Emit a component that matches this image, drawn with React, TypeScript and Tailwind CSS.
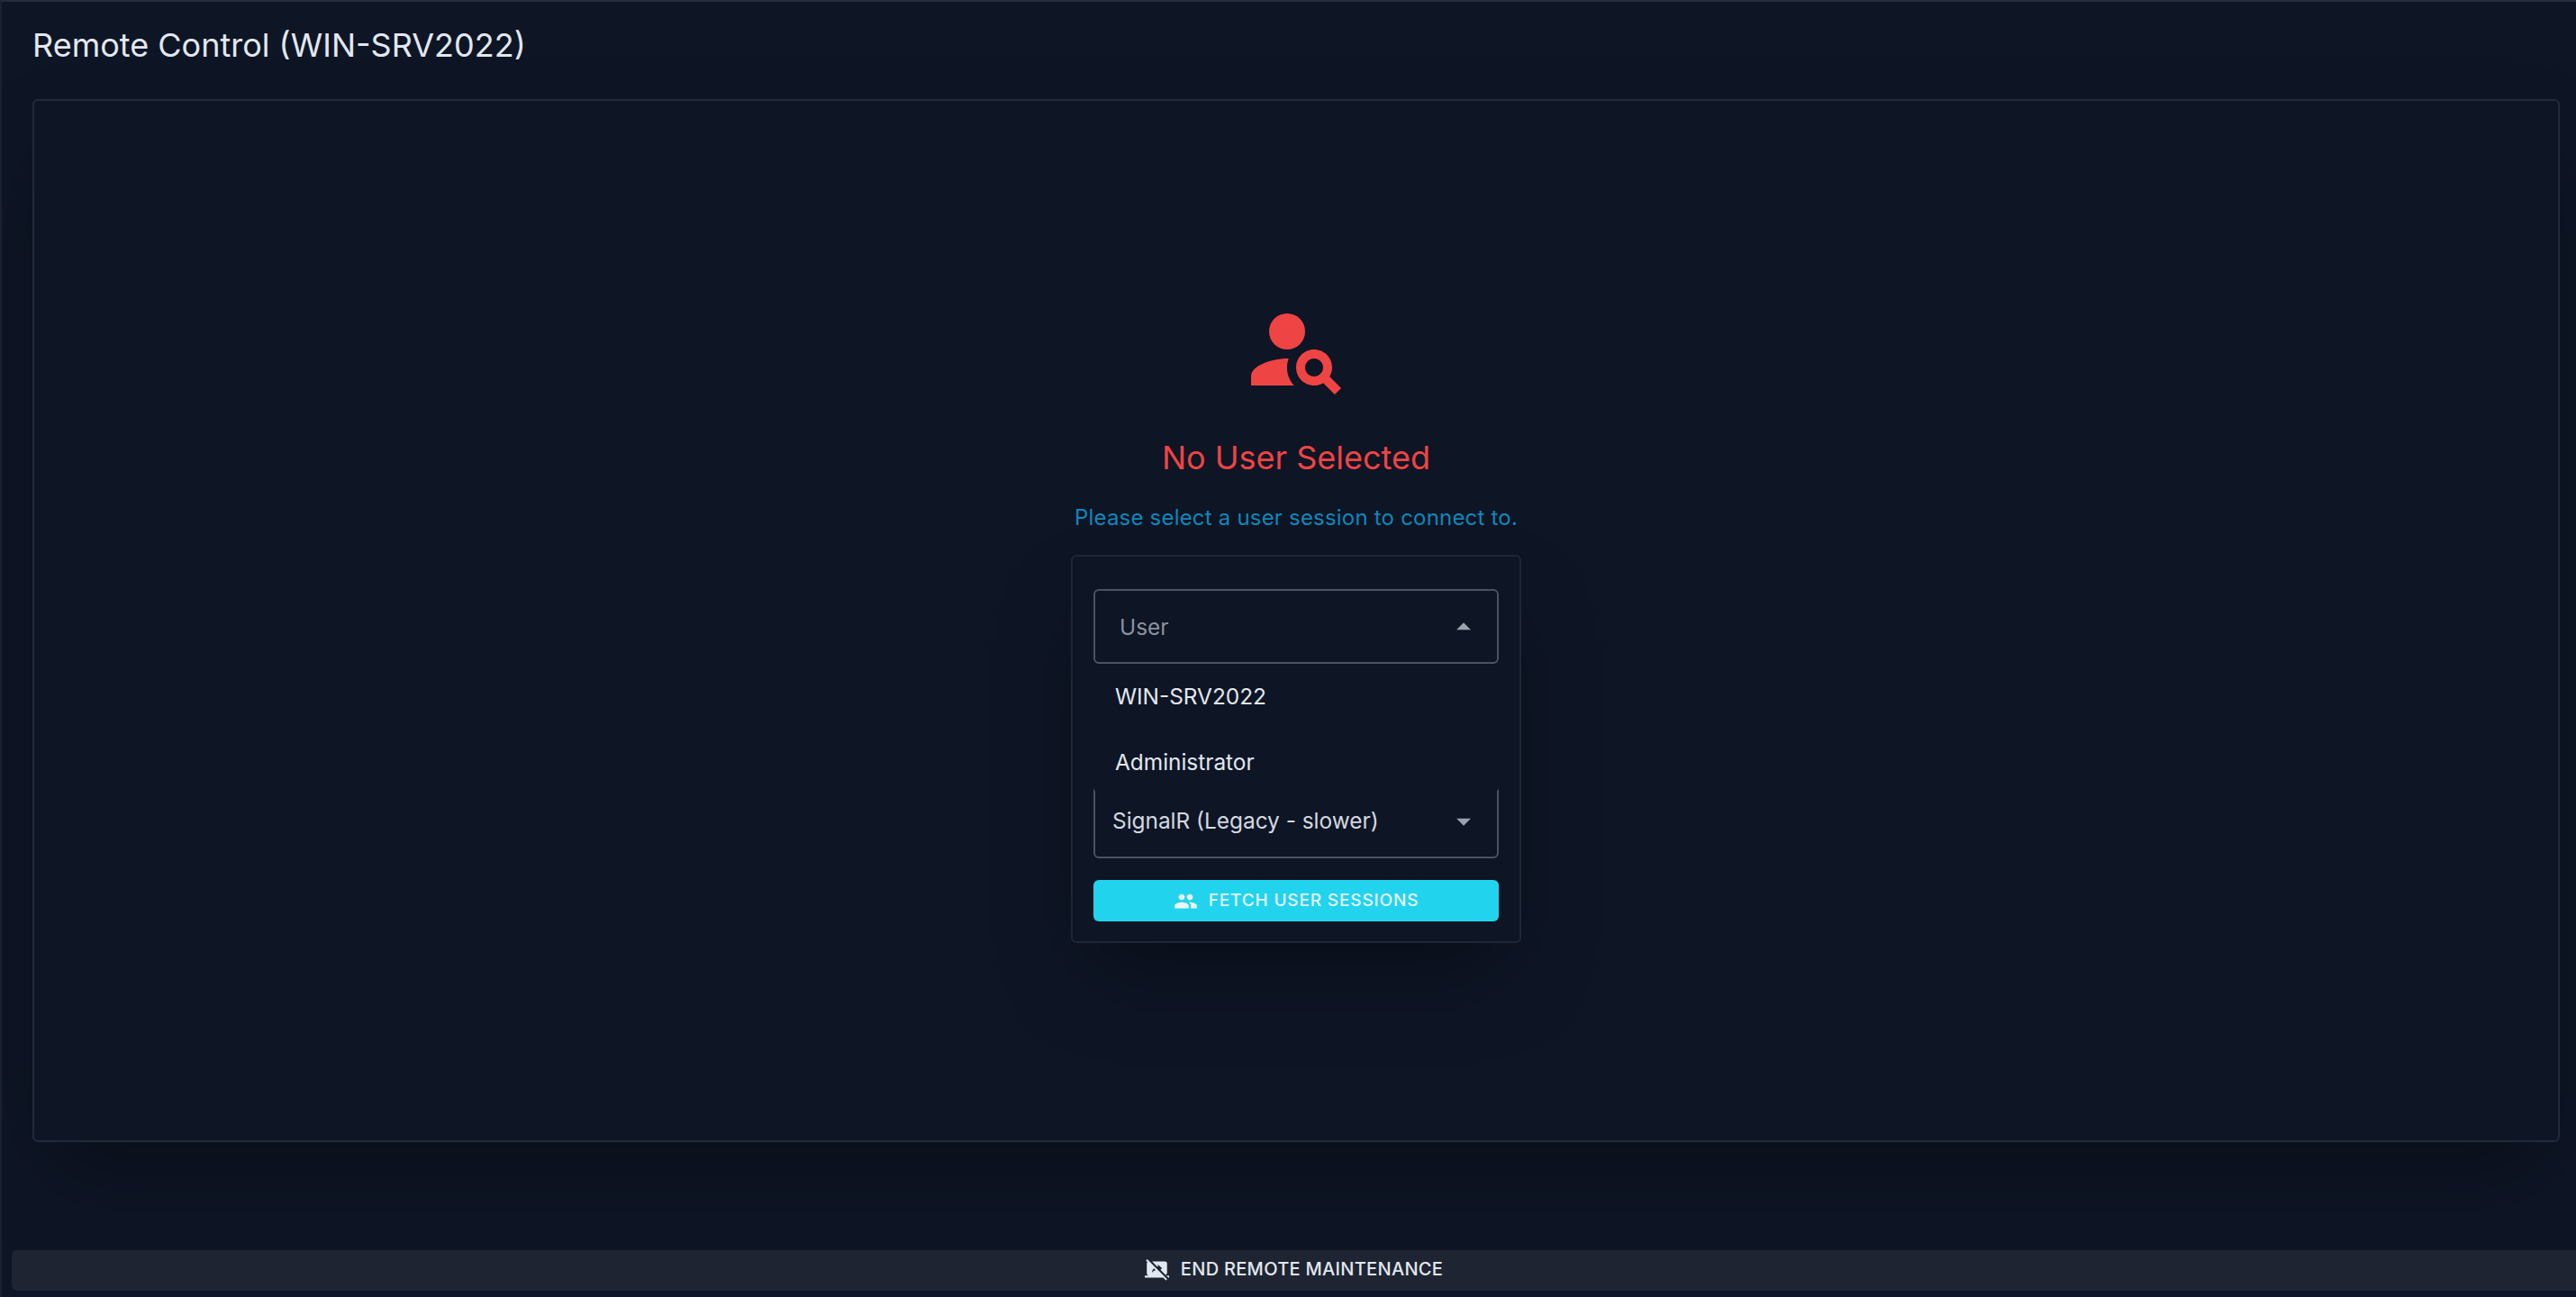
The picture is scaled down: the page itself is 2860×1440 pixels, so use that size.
const font = "font-['Inter','Noto_Sans',sans-serif]";

function PersonSearch() {
  return (
    <svg viewBox="0 0 24 24" className="w-[120px] h-[120px] fill-[#ef4444]">
      <circle cx="10" cy="8" r="4" />
      <path d="M10.35 14.01C7.62 13.91 2 15.27 2 18v2h9.54c-2.47-2.76-1.23-5.89-1.19-5.99zM19.43 18.02c.36-.59.57-1.28.57-2.02 0-2.21-1.79-4-4-4s-4 1.79-4 4 1.79 4 4 4c.74 0 1.43-.22 2.02-.57L20.59 22 22 20.59l-2.57-2.57zM16 18c-1.1 0-2-.9-2-2s.9-2 2-2 2 .9 2 2-.9 2-2 2z" />
    </svg>
  );
}

function People() {
  return (
    <svg viewBox="0 0 24 24" className="w-[27px] h-[27px] fill-[#e6f7fb]">
      <path d="M16 11c1.66 0 2.99-1.34 2.99-3S17.66 5 16 5c-1.66 0-3 1.34-3 3s1.34 3 3 3zm-8 0c1.66 0 2.99-1.34 2.99-3S9.66 5 8 5C6.34 5 5 6.34 5 8s1.34 3 3 3zm0 2c-2.33 0-7 1.17-7 3.5V19h14v-2.5c0-2.33-4.67-3.5-7-3.5zm8 0c-.29 0-.62.02-.97.05 1.16.84 1.97 1.97 1.97 3.45V19h6v-2.5c0-2.33-4.67-3.5-7-3.5z" />
    </svg>
  );
}

function StopShare() {
  return (
    <svg viewBox="0 0 24 24" className="w-[27px] h-[27px] fill-[#e2e8f0]">
      <path d="M21.22 18.02l2 2H24v-2h-2.78zm.77-2l.01-10c0-1.11-.9-2-2-2H7.22l5.23 5.23c.18-.04.36-.07.55-.1V7.02l4 3.73-1.58 1.47 5.38 5.38c.39-.37.59-.9.59-1.58zM2.39 1.73 1.11 3l1.54 1.54c-.4.36-.65.89-.65 1.48v10c0 1.1.89 2 2 2H0v2h18.13l2.71 2.71 1.27-1.27L2.39 1.73zM7 15.02c.31-1.48.92-2.95 2.07-4.05l1.59 1.59c-1.54.38-2.7 1.18-3.66 2.46z" />
    </svg>
  );
}

function Caret({ up }: { up?: boolean }) {
  return (
    <svg viewBox="0 0 24 24" className="w-[38px] h-[38px] fill-[#9aa3af]">
      <path d={up ? "M7 14l5-5 5 5z" : "M7 10l5 5 5-5z"} />
    </svg>
  );
}

export default function App() {
  return (
    <div className={`${font} h-[1440px] w-[2860px] overflow-hidden bg-[#0e1525] border-t-2 border-t-[#262c38] border-l-2 border-l-[#1a2130] flex flex-col`}>
      <h1 className="pl-[34px] pt-[27px] h-[108px] shrink-0 text-[36px] leading-[42px] font-normal text-[#e2e8f0]">
        Remote Control (WIN-SRV2022)
      </h1>
      <div className="ml-[34px] mr-[18px] h-[1158px] shrink-0 rounded-md border-2 border-[#232a38] bg-[#0e1525] shadow-[0_46px_92px_-20px_rgba(0,0,0,0.36)] flex flex-col items-center pt-[216px]">
        <PersonSearch />
        <p className="mt-[38px] text-[36px] leading-[44px] text-[#ef4444]">No User Selected</p>
        <p className="mt-[29px] text-[24px] leading-[32px] text-[#1088bb] tracking-[0.2px]">Please select a user session to connect to.</p>
        <div className="relative mt-[25px] w-[500px] h-[431px] rounded-md border-2 border-[#1f2634] bg-[#0e1525] shadow-[0_46px_92px_-20px_rgba(0,0,0,0.36)] px-[23px] pt-[36px] flex flex-col">
          <div className="h-[83px] rounded-md border-2 border-[#4a5362] flex items-center justify-between pl-[27px] pr-[18px]">
            <span className="pt-[2px] text-[24.4px] text-[#8b929e]">User</span>
            <Caret up />
          </div>
          <div className="mt-[133px] h-[83px] rounded-md border-2 border-[#4a5362] flex items-center justify-between pl-[19px] pr-[18px]">
            <span className="text-[24.4px] text-[#d4d9e0]">SignalR (Legacy - slower)</span>
            <Caret />
          </div>
          <button className="mt-[24px] h-[46px] rounded-md bg-[#22d3ee] flex items-center justify-center gap-[12px] text-[19px] font-medium tracking-[0.85px] text-[#e6f7fb]">
            <People />
            FETCH USER SESSIONS
          </button>
          <div className="absolute left-[23px] top-[119px] w-[450px] h-[143px] bg-[#0e1525] rounded-b-md flex flex-col">
            <div className="h-[73px] shrink-0 pl-[24px] flex items-center text-[24.4px] text-[#e2e8f0]">WIN-SRV2022</div>
            <div className="h-[73px] shrink-0 pl-[24px] flex items-center text-[24.4px] text-[#e2e8f0]">Administrator</div>
          </div>
        </div>
      </div>
      <div className="mt-auto mb-[7px] ml-[11px] h-[45px] pb-[3px] rounded-l-md bg-[#1e2432] flex items-center justify-center gap-[13px] text-[20px] font-medium tracking-[0.3px] text-[#e2e8f0]">
        <StopShare />
        END REMOTE MAINTENANCE
      </div>
    </div>
  );
}
